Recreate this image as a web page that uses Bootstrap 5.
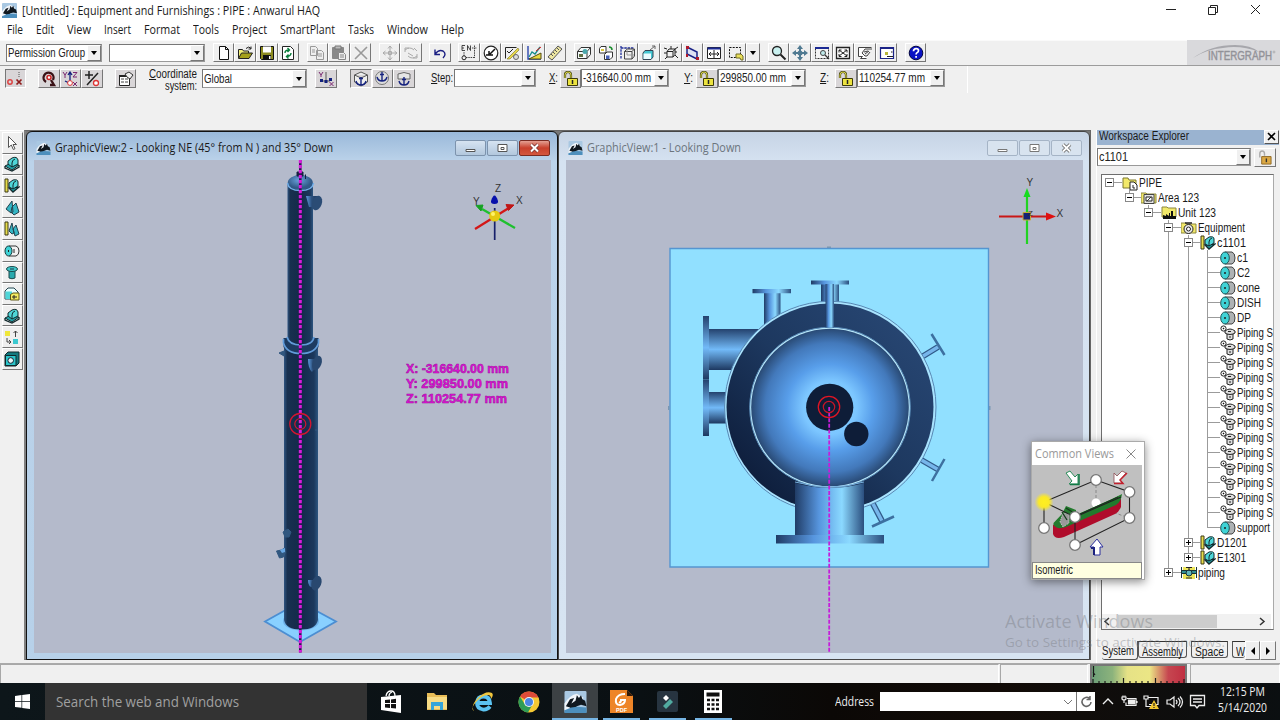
<!DOCTYPE html>
<html lang="en">
<head>
<meta charset="utf-8">
<title>[Untitled] : Equipment and Furnishings : PIPE</title>
<link href="https://cdn.jsdelivr.net/npm/bootstrap@5.3.0/dist/css/bootstrap.min.css" rel="stylesheet">
<script src="https://cdn.jsdelivr.net/npm/bootstrap@5.3.0/dist/js/bootstrap.bundle.min.js"></script>
<style>
body{width:1280px;height:720px;overflow:hidden;background:#f0f0f0;color:#1a1a1a;font-family:"Liberation Sans",Arial,sans-serif;font-size:12px;line-height:1}
.ui{font-family:"Open Sans","Segoe UI",sans-serif}
svg{display:block;flex:none}
[data-w]{white-space:nowrap;display:inline-block}
.fit{display:inline-block;transform-origin:0 50%}
.titlebar{height:20px;background:#fff;padding-left:2px}
.titlebar .ui{font-size:12px;margin-left:5px;margin-top:2px}
.menubar{height:20px;background:#fff;padding-left:7px;gap:13px;font-size:12px}
.tools1{height:26px;padding:0 0 1px 6px;border-top:1px solid #fafafa;border-bottom:1px solid #9c9c9c;gap:7.4px;background:#f0f0f0}
.tools2{height:64px;padding:3px 0 0 4.5px}
.combo{height:18px;background:#fff;border:1.5px solid #777;border-right-color:#999;border-bottom-color:#999;padding-left:1px;color:#222}
.combo .dd{width:14px;align-self:stretch;background:#f0f0f0;border:1px solid #fff;border-right-color:#777;border-bottom-color:#777}
.combo .dd::after,.ddb::after{content:"";border:3.5px solid transparent;border-top:4px solid #000;border-bottom:0}
.tb{width:21.6px;height:19px;padding:0;border:1px solid #fff;border-right:1.5px solid #777;border-bottom:1.5px solid #777;border-radius:0;background:#efefef;display:flex;align-items:center;justify-content:center;flex:none}
.tb.on{border-color:#777 #fff #fff #777;background:#e4e4e4}
.ddb{width:14px}
.tools2 .tb{background:#d9d6d8;height:19px}
.brand{width:93px;height:25px;background:#d9d9dc}
.workarea{height:533px}
.toolstrip{width:24px;padding:1px 0 0 1.5px;border-top:1px solid #fff}
.toolstrip .tb{height:21.6px;width:21px}
.mdi{width:1067px;background:#777;border:1px solid #666;border-left:2px solid #808080;padding:0;height:530px}
.gview{height:529px;border:1.5px solid #111;border-radius:6px 6px 0 0;padding:0 6.5px 5px}
.gview .cap{height:28px;padding:3px 1px 0 2px}
.gview.act{width:533px;background:linear-gradient(#9ab9da,#bcd3ea 30px,#b7d1e9)}
.gview.idle{width:532px;background:linear-gradient(#c6d4e5,#d5e2f1 30px,#d7e4f2);border-color:#444}
.cbtn{width:31px;height:16px;border:1px solid #7d93ad;border-radius:2px;background:linear-gradient(#d6e3f1,#b2c7dd);margin-left:1px}
.idle .cbtn{background:#d8e3ef;border-color:#a5b4c6}
.cbtn.x{background:linear-gradient(#e4a093,#c9402c 50%,#d3573f);border-color:#7a2b22}
.explorer{width:184px;border-left:1px solid #fff}
.exhead{height:15px;width:182px;background:#9ab3d0;padding-left:2px}
.exhead button{width:15px;height:14px;padding:0;border:1px solid #fff;border-right-color:#555;border-bottom-color:#555;background:#f0f0f0;border-radius:0}
.treebox{margin:7px 0 0 4px;width:173px;height:456px;background:#fff;border:1.5px solid #6e6e6e;border-right-color:#aaa;overflow:hidden}
.trow{height:15.02px;display:flex;align-items:center;white-space:nowrap}
.gd{width:19.7px;height:15.02px;flex:none;position:relative}
.gd.v::before{content:"";position:absolute;left:7px;top:0;bottom:0;border-left:1px solid #9b9b9b}
.gd.up::before{bottom:7px}
.gd.h::after{content:"";position:absolute;left:7px;right:0;top:7px;border-top:1px solid #9b9b9b}
.gd b{position:absolute;left:3px;top:3px;width:9px;height:9px;border:1px solid #888;background:#fff;z-index:1}
.gd b::before{content:"";position:absolute;left:1px;right:1px;top:3px;border-top:1px solid #000}
.gd b.p::after{content:"";position:absolute;top:1px;bottom:1px;left:3px;border-left:1px solid #000}
.hscroll{height:15px;background:#f1f1f1;margin-right:2px}
.hscroll i{width:99px;height:13px;background:#cdcdcd;margin-left:8px}
.tabrow{height:20px;margin-top:11px;padding-left:5px}
.tabx{height:17px;padding:0 3px;border:1px solid #555;border-top:1px solid #333;background:#f0f0f0;border-radius:0 0 3px 3px}
.tabx.sel{border-top:0;border-left:0;height:19px;border-right-color:#555}
.statusbar{height:20px;border-top:1px solid #aaa;background:#f0f0f0}
.spanel{border:1px solid #a8a8a8;border-right-color:#fff;border-bottom:0;height:19px}
.gauge{width:97px;height:19px;border:2px solid #777;border-bottom:0;background:linear-gradient(90deg,#6d9f78 0,#8cb37c 22%,#e6e286 38%,#ebe685 62%,#c64650 82%,#c02f42)}
.taskbar{height:37px;background:linear-gradient(90deg,#0d161a,#0a1013 50%,#0b0806 65%,#120b07 78%,#0b0f11);color:#eee}
.startb{width:45px}
.search{width:322px;background:#333;color:#a0a0a0;font-size:15px;padding-left:11px;height:37px}
.app{width:46px;height:37px;display:flex;align-items:center;justify-content:center;position:relative}
.app.run::after{content:"";position:absolute;bottom:0;left:5px;right:4px;height:2px;background:#76b5e4}
.app.cur{background:#3c4144}.app.cur::after{left:0;right:0}
.addr{width:215px;height:19px;background:#fff;color:#555;margin-left:6px}
.tray{gap:5px;margin-left:5px}
.clock{font-size:12px;line-height:16px;width:60px;text-align:center;margin:-3px 0 0 6px}
.commonviews{position:absolute;left:1031px;top:441px;width:114px;height:139px;background:#fff;border:1px solid #aaa;box-shadow:0 2px 9px rgba(0,0,0,.45)}
.commonviews .hd{height:23px;color:#999;font-size:12px;padding:0 8px 0 3px}
.commonviews .lb{height:17px;width:110px;background:#ffffe1;border:1px solid #888;padding:1px 0 0 2px}
.wmark{position:absolute;left:1005px;top:610px;color:rgba(120,124,130,.42);pointer-events:none}
.wmark .a{font-size:18px;line-height:22px}.wmark .b{font-size:13px;line-height:20px}
</style>
</head>
<body class="d-flex flex-column">
<svg width="0" height="0" class="position-absolute"><defs>
<symbol id="app" viewBox="0 0 16 16"><rect width="16" height="16" rx="1" fill="#a9c8e2"/><path d="M0 9Q4 3 9 2l5 3-5 3-5 6-4 0z" fill="#f0f5fa"/><path d="M1 11 4 6 7 5 5 9 8 7 9 3l1.500 2L12 3l1 3 2 1 1 4-4-1-3 1-3 3-2-2z" fill="#10181f"/><path d="M0 14 5 12 9 11.500 16 12V16H0z" fill="#4d8fbd"/></symbol>
<symbol id="new" viewBox="0 0 16 16"><path d="M3.500 1.500h6l3 3v10h-9zM9.500 1.500v3h3" fill="#fff" stroke="#111"/></symbol>
<symbol id="open" viewBox="0 0 16 16"><path d="M1.500 13V4.500h4l1 1.500h5v2" fill="#f2ef7a" stroke="#222"/><path d="M1.500 13.500 4.500 8h11L12 13.500z" fill="#a5a11b" stroke="#222"/><path d="M9 3.500q3-3 5 0m0-2v2.500h-2.500" fill="none" stroke="#222"/></symbol>
<symbol id="save" viewBox="0 0 16 16"><path d="M1.500 1.500h13v13h-12l-1-1z" fill="#8c8b20" stroke="#111"/><path d="M4 1.500h8v6H4z" fill="#fff"/><path d="M4 10h8v4.500H4z" fill="#111"/><path d="M10 11h1.500v3H10z" fill="#fff"/></symbol>
<symbol id="refresh" viewBox="0 0 16 16"><path d="M2.500 1.500h8l3 3v10h-11z" fill="#fff" stroke="#222"/><path d="M5 8q0-3 4-3m-1.500-2L9.500 5 7.500 7M11 8q0 3-4 3.500m1.500 2L6.500 11.500 8.500 9.500" fill="none" stroke="#087c3a" stroke-width="1.400"/></symbol>
<symbol id="copy" viewBox="0 0 16 16"><path d="M1.500 1.500h5l2 2v7h-7zM7.500 5.500h5l2 2v7h-7zM3 5h3M3 7h3M9 9h4M9 11h4" fill="#eee" stroke="#999"/></symbol>
<symbol id="paste" viewBox="0 0 16 16"><path d="M1.500 2.500h11v11h-11z" fill="#888" stroke="#888"/><path d="M4 1h6v3H4z" fill="#bbb" stroke="#777"/><path d="M7.500 7.500h5l2 2v5h-7zM9 10h4M9 12h4" fill="#eee" stroke="#888"/></symbol>
<symbol id="del" viewBox="0 0 16 16"><path d="M2 2 14 14M14 2 2 14" stroke="#999" stroke-width="1.600"/></symbol>
<symbol id="move" viewBox="0 0 16 16"><path d="M8 1v14M1 8h14M6 3.500 8 1l2 2.500M6 12.500 8 15l2-2.500M3.500 6 1 8l2.500 2M12.500 6 15 8l-2.500 2M6.500 6.500h3v3h-3z" fill="none" stroke="#aaa"/></symbol>
<symbol id="rot" viewBox="0 0 16 16"><path d="M2 7V3h4M2 5q5-4 9 0M14 9v4h-4M14 11q-5 4-9 0M11 3l3 3M5 8l5 3" fill="none" stroke="#aaa"/></symbol>
<symbol id="undo" viewBox="0 0 16 16"><path d="M3 9q4-5 8-3 4 3 0 7M3 4.500V9.500H8" fill="none" stroke="#1b1f83" stroke-width="1.400"/></symbol>
<symbol id="en" viewBox="0 0 16 16"><path d="M1 .5h3M1 .5v5h3M1 3h2M6.500 5.500V.5l3 5V.5" fill="none" stroke="#333" stroke-width=".9"/><path d="M3 11V7m2 5.500h9M13.500 5v8M11 3h5M13.500.500v5" fill="none" stroke="#444" stroke-dasharray="1.500 .8"/><circle cx="3" cy="12.800" r="2" fill="none" stroke="#222"/></symbol>
<symbol id="dial" viewBox="0 0 16 16"><circle cx="8" cy="8" r="6.800" fill="#fff" stroke="#222" stroke-width="1.200"/><path d="M3 10h7M12 4 7 9M6 6v4h4" stroke="#111" stroke-width="1.500" fill="none"/></symbol>
<symbol id="chk" viewBox="0 0 16 16"><path d="M1.500 2.500h11M1.500 2.500v11M3 6l2 2 4-4" stroke="#222" fill="none"/><path d="M3 14 14 3l1 2L6 14z" fill="#e9d94b" stroke="#776f22" stroke-width=".6"/><circle cx="12" cy="12" r="2.500" fill="#ddd" stroke="#666"/></symbol>
<symbol id="graph" viewBox="0 0 16 16"><path d="M2 1v13h13" stroke="#1e3aa8" stroke-width="1.300" fill="none"/><path d="M3 12 6 7l3 2 5-7" stroke="#178c8c" fill="none" stroke-width="1.300"/><path d="M10 6l5-4" stroke="#d22"/><path d="M3 14 15 8v6z" fill="#e8d840" stroke="#554d10"/></symbol>
<symbol id="ruler" viewBox="0 0 16 16"><path d="M1 12 11 1l4 3L5 15z" fill="#eee7a2" stroke="#555"/><path d="m4 9 2 2m0-4 2 2m0-4 2 2m0-4 2 2" stroke="#555"/></symbol>
<symbol id="cubeg" viewBox="0 0 16 16"><path d="M1.500 6.500 5 2.500h9.500v7L11 13.500H1.500zM1.500 6.500H11v7M11 6.500l3.500-4" fill="#f4fafa" stroke="#333"/><circle cx="9" cy="6.500" r="2.500" fill="#4aa8ac"/><path d="M3 9h4v3H3z" fill="#5e6f42"/></symbol>
<symbol id="cubes" viewBox="0 0 16 16"><path d="M1.500 3.500 3 1.500h5v5L7 8H1.500zM6.500 9.500 9 7h5.500v5L12 14.500H6.500z" fill="#fff" stroke="#333"/><path d="M8 10.500h3.500v3.500H8z" fill="#4761b5"/><path d="M11 2q3 0 3 3" stroke="#178c2c" fill="none" stroke-width="1.500"/><path d="M3 4h3v2H3z" fill="#d8c53b"/></symbol>
<symbol id="wire" viewBox="0 0 16 16"><path d="M1 3h13M1 1v13" stroke="#1f2e99" stroke-width="1.300" stroke-dasharray="2.500 .8"/><path d="M4.500 6.500 7 4h7.500v7L12 14H4.500zM4.500 6.500H12V14M12 6.500 14.500 4" fill="none" stroke="#444"/><path d="M7 4v6h7" stroke="#999" fill="none"/></symbol>
<symbol id="box" viewBox="0 0 16 16"><path d="M2 8 4 5.500h8V12l-2 2.500H2z" fill="#45c7d2" stroke="#345"/><path d="M2.500 8.500H10v5.500H2.500z" fill="#eafcff"/><path d="M9 5l5-4m-3 0h3v3" stroke="#666" fill="none"/></symbol>
<symbol id="fit" viewBox="0 0 16 16"><path d="M4 6.500 6 4h6v5.500L10 12H4zM4 6.500h6V12M10 6.500 12 4" fill="none" stroke="#222"/><path d="M1 3l3 1M15 2l-3 2M2 14l2-2M15 13l-3-3M8 1v3M14 7h-2M1 8h3" stroke="#222"/></symbol>
<symbol id="plane" viewBox="0 0 16 16"><path d="M3 2 13 7V14L3 9z" fill="#dfe2f3" stroke="#1b2387" stroke-width="1.500"/><path d="M2 1h3v3H2zM12 12h3v3h-3zM2 9h2v3H2z" fill="#b11a2b"/></symbol>
<symbol id="center" viewBox="0 0 16 16"><path d="M1.500 2.500h13v11h-13z" fill="#fff" stroke="#222"/><path d="M1.500 3.500h13" stroke="#1c2a94" stroke-width="2"/><path d="M8 5v8M3.500 9h9M5 7 3 9l2 2M11 7l2 2-2 2" stroke="#222" fill="none"/></symbol>
<symbol id="fence" viewBox="0 0 16 16"><path d="M1.500 2.500h11v10h-11z" fill="none" stroke="#111" stroke-dasharray="2 1.200"/><path d="M8 9h5l2 2v4h-2l-1-2H8z" fill="#e9df5a" stroke="#6f6a26"/></symbol>
<symbol id="zoom" viewBox="0 0 16 16"><circle cx="6" cy="6" r="4.500" fill="#c9f0ef" stroke="#222" stroke-width="1.300"/><path d="m9.500 9.500 5 5" stroke="#222" stroke-width="2"/></symbol>
<symbol id="pan" viewBox="0 0 16 16"><path d="M8 0l3 4H9v2h-2V4H5zM8 16l3-4H9v-2H7v2H5zM0 8l4-3v2h8V5l4 3-4 3V9H4v2z" fill="#4f7991"/><circle cx="8" cy="8" r="2.500" fill="#4f7991"/></symbol>
<symbol id="zwin" viewBox="0 0 16 16"><path d="M1.500 2.500h13v11h-13z" fill="#f4f4f4" stroke="#333" stroke-dasharray="2 1"/><path d="M1 3h14" stroke="#1c2a94" stroke-width="2"/><circle cx="9" cy="8" r="2.500" fill="#bfe9ea" stroke="#444"/><path d="m11 10 4 4" stroke="#333" stroke-width="1.300"/></symbol>
<symbol id="zall" viewBox="0 0 16 16"><path d="M1.500 2.500h13v11h-13z" fill="#fff" stroke="#222" stroke-width="1.300"/><path d="m4 5 8 6M12 5l-8 6M4 7.500V5h2.500M9.500 5H12v2.500M4 9v2.500h2.500M9.500 11.500H12V9" fill="none" stroke="#222"/></symbol>
<symbol id="hand" viewBox="0 0 16 16"><path d="M14.500 2.500h-13v9h4l-2 2h6" fill="#fff" stroke="#444"/><path d="M15 4 8 4 5 8l3 3 2 0 3-4M7 7l4-1M8 9l4-3" fill="#eee" stroke="#444"/></symbol>
<symbol id="wins" viewBox="0 0 16 16"><path d="M1.500 2.500h13v11h-13z" fill="#fff" stroke="#1b2387" stroke-width="1.200"/><path d="M1 3h14" stroke="#1b2387" stroke-width="2"/><path d="M6 7h3v3H6z" fill="#b9b63a"/><path d="M12 7h1.500M8 11.500h6" stroke="#222"/></symbol>
<symbol id="help" viewBox="0 0 16 16"><circle cx="8" cy="8" r="6.800" fill="#0a12c4" stroke="#02063f"/><path d="M5.500 6.200q0-2.500 2.600-2.500 2.400 0 2.400 2 0 1.300-1.500 2-.9.400-.9 1.800M8.100 11v1.700" fill="none" stroke="#fff" stroke-width="1.700"/></symbol>
<symbol id="pt" viewBox="0 0 16 16"><circle cx="3" cy="11" r="2.200" fill="none" stroke="#d44" stroke-width="1.500"/><path d="m9.500 8.500 5 5m0-5-5 5" stroke="#8e1b1b" stroke-width="1.700"/><path d="M12 1v6" stroke="#555" stroke-dasharray="1 1"/></symbol>
<symbol id="pin" viewBox="0 0 16 16"><path d="M5 11a5 5 0 1 1 7-2M9 14h4l-3-5" fill="none" stroke="#3a1216" stroke-width="2.400"/><circle cx="8" cy="6.500" r="2" fill="#fff" stroke="#c22" stroke-width="1.500"/></symbol>
<symbol id="xyz" viewBox="0 0 16 16"><path d="M1 1l2 3 2-3M3 4v3M11 1.500h4L11 6h4M11 11l4 4m0-4-4 4" stroke="#7a2670" fill="none"/><path d="M8 1v10M3 10l4 2M6 4l2-3 2 3" stroke="#111f7c" fill="none" stroke-width="1.300"/><circle cx="8" cy="12" r="2.400" fill="#fff" stroke="#d33"/></symbol>
<symbol id="pm" viewBox="0 0 16 16"><path d="M5 0v8M1 4h8M3 14 14 2" stroke="#222" stroke-width="1.500"/><circle cx="12" cy="12" r="2.500" fill="#fff" stroke="#d33" stroke-width="1.300"/></symbol>
<symbol id="prop" viewBox="0 0 16 16"><path d="M1.500 4.500h10v10h-10z" fill="#fff" stroke="#222"/><path d="M1 5h11" stroke="#222" stroke-width="2"/><path d="M3 8h3M3 11h3M7 8h3M7 11h3" stroke="#444"/><path d="M7 3l4-2 4 3-3 4-3-2z" fill="#eee" stroke="#333"/></symbol>
<symbol id="axis" viewBox="0 0 16 16"><path d="M1 1l2 3 2-3M3 4v2M11.500 11l4 4m0-4-4 4" stroke="#7a2670" fill="none"/><path d="M8 1v10M2 8l2 2h8l2-2" stroke="#555" fill="none"/><path d="M6.500 9h3v3h-3zM2 8h3v3H2zM11 7h3v3h-3z" fill="#111f7c"/></symbol>
<symbol id="anc1" viewBox="0 0 16 16"><path d="M1.500 4 8 1l6.500 3v7L8 15l-6.500-4zM1.500 4 8 7l6.500-3" fill="#eee" stroke="#555"/><path d="M8 6v8M3 10q1 4 5 4t5-4M6 7.500h4" stroke="#16237f" fill="none" stroke-width="1.400"/></symbol>
<symbol id="anc2" viewBox="0 0 16 16"><circle cx="8" cy="7" r="6.500" fill="#ddd" stroke="#777"/><path d="M8 1v9M3 6q1 4 5 4t5-4M6 3.500h4" stroke="#16237f" fill="none" stroke-width="1.400"/></symbol>
<symbol id="anc3" viewBox="0 0 16 16"><path d="M2 3q6-3 12 0v5H2z" fill="#e6e6e6" stroke="#666"/><path d="M8 6v8M3 10q1 4 5 4t5-4M6 8.500h4" stroke="#16237f" fill="none" stroke-width="1.400"/></symbol>
<symbol id="lock" viewBox="0 0 16 16"><path d="M2 7V4q0-3 3-3t3 3v3" fill="none" stroke="#4b4b13" stroke-width="2.200"/><path d="M2 7V4q0-3 3-3t3 3v3" fill="none" stroke="#e8e250" stroke-width=".9"/><path d="M4.500 7.500h10v7h-10z" fill="#ece33f" stroke="#3c3a0c"/><path d="M9.500 9v4" stroke="#222" stroke-width="1.500"/></symbol>
<symbol id="ptr" viewBox="0 0 16 16"><path d="M4.500 1.500v11l2.800-2.500 2 4.500 1.700-.8-2-4.200h3.500z" fill="#fff" stroke="#555"/></symbol>
<symbol id="eq" viewBox="0 0 16 16"><path d="M1 10 5 8 15 9 8 14z" fill="#23a2a8" stroke="#12292c"/><path d="M1 10v2l7 3 7-4V9" fill="none" stroke="#12292c" stroke-width="1.300"/><path d="M4 8V5l4-3q5-2 6 2v4l-6 3z" fill="#4fd6d8" stroke="#12292c"/><path d="M8 11V7q0-3 3-4" fill="none" stroke="#12292c"/></symbol>
<symbol id="eqr" viewBox="0 0 16 16"><path d="M1 1h3v13H1z" fill="#e6dc4b" stroke="#3c3b16"/><path d="M5 10 15 9 9 14z" fill="#23a2a8" stroke="#12292c" stroke-width="1.300"/><path d="M5 9V5l4-3q5-1 5 2v4l-5 3z" fill="#4fd6d8" stroke="#12292c"/><path d="M9 11V7q0-3 3-4" fill="none" stroke="#12292c"/></symbol>
<symbol id="pl" viewBox="0 0 16 16"><path d="M2 9 8 1l1 11-2 1zM7 12l1-5 4-4 3 9-5 3z" fill="#35b5c4" stroke="#24424d"/></symbol>
<symbol id="plr" viewBox="0 0 16 16"><path d="M1 1h3v13H1z" fill="#e6dc4b" stroke="#3c3b16"/><path d="M5 10 8 2l2 10-2 1zM9 8l3-4 3 9-4 2z" fill="#35b5c4" stroke="#24424d"/></symbol>
<symbol id="cyl" viewBox="0 0 16 16"><path d="M5 3h7q3 1 3 5t-3 5H5z" fill="#f2f2f2" stroke="#333"/><ellipse cx="4.500" cy="8" rx="3.500" ry="5" fill="#3fd3d6" stroke="#1c3b3d"/><path d="M4.500 7v2M10 6v4" stroke="#222"/></symbol>
<symbol id="cylg" viewBox="0 0 16 16"><path d="M5 2h7q3 1 3 6t-3 6H5z" fill="#aeb2b4" stroke="#444"/><ellipse cx="5" cy="8" rx="4.300" ry="6" fill="#3fd3d6" stroke="#1c5557"/><path d="M5 7v2" stroke="#222" stroke-width="1.500"/></symbol>
<symbol id="noz" viewBox="0 0 16 16"><path d="M5 6h6v8q-3 1.500-6 0z" fill="#2aa9ad" stroke="#1c4b4d"/><ellipse cx="8" cy="5" rx="5.500" ry="2.500" fill="#3ec8ca" stroke="#1c4b4d"/><path d="M6 5h4" stroke="#234"/></symbol>
<symbol id="sol" viewBox="0 0 16 16"><path d="M1 5 4 2h6l4 4v7H1z" fill="#e9ffff" stroke="#24424d"/><path d="M1.500 5.500H8V13H1.500z" fill="#4fd6d8"/><path d="M6.500 8.500 9 7h6v7H6.500z" fill="#f2ea62" stroke="#5e5816"/><path d="M8 11h5m-3-2v4" stroke="#222"/></symbol>
<symbol id="swap" viewBox="0 0 16 16"><path d="M1 2h5v5H1z" fill="#efe73a"/><path d="M9 10h5v5H9z" fill="#3cc9d0"/><path d="M11.500 8V2M9.500 4l2-2 2 2M3 9v4h4M5 11l2 2-2 2" stroke="#444" fill="none"/></symbol>
<symbol id="hole" viewBox="0 0 16 16"><path d="M1 4 4 1h11V12l-3 3H1z" fill="#14797e" stroke="#10282a"/><path d="M1.500 4.500H12v10H1.500z" fill="#2bc5ca" stroke="#10282a"/><circle cx="6.700" cy="9.500" r="2.800" fill="#e9f6f6" stroke="#123"/></symbol>
<symbol id="fpipe" viewBox="0 0 16 16"><path d="M1 3h5l1 2h7v8H1z" fill="#f2e96a" stroke="#7d7830"/><path d="M8 7h4l3 3v5H8z" fill="#fff" stroke="#222"/><path d="M11 10v3h2" stroke="#222" fill="none"/></symbol>
<symbol id="farea" viewBox="0 0 16 16"><path d="M0 3h5l1 1h9v9H0z" fill="#f2e96a" stroke="#8b8640"/><path d="M3 4.500h10v9H3z" fill="#e4e4e4" stroke="#444"/><path d="M5 7h6v4H5z" fill="#fff" stroke="#222"/><path d="m6 11 4-4" stroke="#333"/></symbol>
<symbol id="funit" viewBox="0 0 16 16"><path d="M1 2h5l1 1h8v9H1z" fill="#f2e96a" stroke="#8b8640"/><path d="M2 14V10l3 1V9l3 2V8h1v3h1V6h2v5h3v3z" fill="#111"/></symbol>
<symbol id="feq" viewBox="0 0 16 16"><path d="M0 3h5l1 1h9v9H0z" fill="#f2e96a" stroke="#8b8640"/><circle cx="7.500" cy="9" r="4.500" fill="#eee" stroke="#222"/><circle cx="7.500" cy="9" r="2" fill="#fff" stroke="#222"/><path d="M4 3h7" stroke="#222" stroke-width="1.500"/></symbol>
<symbol id="pn" viewBox="0 0 16 16"><circle cx="3.500" cy="3.500" r="2.600" fill="#fff" stroke="#222"/><path d="M3 3h1v1H3z" fill="#111" stroke="#111" stroke-width=".5"/><path d="M5 6q5-4 10 0v2l-2 1v5q-3 2-6 0V9L5 8z" fill="#ddd" stroke="#222"/><path d="M7 9q3 1 6 0M8 6.500h3M9 12h2" stroke="#222" fill="none"/></symbol>
<symbol id="fp" viewBox="0 0 16 16"><path d="M2 2h12v12H2z" fill="#ede558"/><path d="M.5 2v11M15.500 2v11M.5 5.500h15v3H.5z" fill="#338f95" stroke="#1a3335"/><circle cx="8" cy="8" r="3" fill="#62b6bb" stroke="#1a3335"/><path d="M5 2.500h6M8 3v3M5 13h6" stroke="#222"/></symbol>
</defs></svg>

<header>
<div class="titlebar d-flex align-items-center"><svg width="15" height="15"><use href="#app"/></svg><span class="ui" data-w="298">[Untitled] : Equipment and Furnishings : PIPE : Anwarul HAQ</span>
<svg class="ms-auto" style="margin-right:12px" width="104" height="18" fill="none" stroke="#222"><path d="M2 8.500h10M44.500 6.500h7v7h-7zM46.500 6.500v-2h7v7h-2M87 4l9 9m0-9-9 9"/></svg></div>
<nav class="menubar ui d-flex align-items-center"><span data-w="16">File</span><span data-w="18">Edit</span><span data-w="24">View</span><span data-w="27">Insert</span><span data-w="36">Format</span><span data-w="26">Tools</span><span data-w="35">Project</span><span data-w="55">SmartPlant</span><span data-w="26">Tasks</span><span data-w="41">Window</span><span data-w="23">Help</span></nav>
<div class="tools1 d-flex align-items-center">
<div class="combo d-flex align-items-center justify-content-between" style="width:96px"><span data-w="77">Permission Group</span><span class="dd d-flex align-items-center justify-content-center"></span></div>
<div class="combo d-flex align-items-center justify-content-end" style="width:96px"><span class="dd d-flex align-items-center justify-content-center"></span></div>
<div class="d-flex" data-tools="new open save refresh"></div><div class="d-flex" data-tools="copy paste del"></div><div class="d-flex" data-tools="move rot"></div><div class="d-flex" data-tools="undo"></div><div class="d-flex" data-tools="en dial chk graph ruler"></div>
<div class="d-flex"><div class="d-flex" data-tools="cubeg cubes wire box fit plane center fence"></div><button class="tb ddb"></button></div>
<div class="d-flex" data-tools="zoom pan zwin zall hand wins"></div><div class="d-flex" data-tools="help"></div>
<div class="brand ms-auto"><svg width="93" height="25" fill="none"><path d="M6 18Q24 5 48 5q16 0 24 7-18-7-36-4Q20 9 6 18z" fill="#a7a7ac"/><text x="21" y="20" font-family="Liberation Sans" font-size="12" fill="#929298" stroke="#929298" stroke-width=".4" textLength="64" lengthAdjust="spacingAndGlyphs">INTERGRAPH</text><circle cx="87" cy="12" r="1" stroke="#999" stroke-width=".6"/></svg></div>
</div>
<div class="tools2 d-flex align-items-start">
<div data-tools="pt" data-on="1"></div>
<div class="d-flex" style="margin-left:12px" data-tools="pin xyz pm"></div>
<div style="margin-left:12px" data-tools="prop"></div>
<div class="text-end" style="width:61px;margin-top:-1px;line-height:12px"><span data-w="48"><u>C</u>oordinate</span><br><span data-w="32">system:</span></div>
<div class="combo d-flex align-items-center justify-content-between" style="width:105px;margin-left:5px;height:19px"><span data-w="28">Global</span><span class="dd d-flex align-items-center justify-content-center"></span></div>
<div style="margin-left:8px" data-tools="axis"></div>
<div class="d-flex" style="margin-left:13px" data-tools="anc1 anc2 anc3" data-on="1"></div>
<div class="d-flex align-items-center" style="margin-left:16px;height:17px"><span data-w="22"><u>S</u>tep:</span></div>
<div class="combo d-flex justify-content-end" style="width:82px;margin-left:1px"><span class="dd d-flex align-items-center justify-content-center"></span></div>
<div class="d-flex align-items-center" style="margin-left:13px;height:17px;width:11px"><span data-w="9"><u>X</u>:</span></div><div data-tools="lock"></div>
<div class="combo d-flex align-items-center justify-content-between" style="width:88px"><span data-w="68">-316640.00 mm</span><span class="dd d-flex align-items-center justify-content-center"></span></div>
<div class="d-flex align-items-center" style="margin-left:15px;height:17px;width:12px"><span data-w="9"><u>Y</u>:</span></div><div data-tools="lock"></div>
<div class="combo d-flex align-items-center justify-content-between" style="width:88px"><span data-w="66">299850.00 mm</span><span class="dd d-flex align-items-center justify-content-center"></span></div>
<div class="d-flex align-items-center" style="margin-left:14px;height:17px;width:15px"><span data-w="9"><u>Z</u>:</span></div><div data-tools="lock"></div>
<div class="combo d-flex align-items-center justify-content-between" style="width:88px"><span data-w="66">110254.77 mm</span><span class="dd d-flex align-items-center justify-content-center"></span></div>
<div class="border-start border-white" style="margin:-3px 0 0 22px;height:27px"></div>
</div>
</header>

<main class="workarea d-flex">
<aside class="toolstrip" data-tools="ptr eq eqr pl plr cyl noz sol eq swap hole"></aside>
<section class="mdi d-flex">
<div class="gview act"><div class="cap d-flex align-items-center"><svg width="15" height="14"><use href="#app"/></svg><span class="ui ms-1" style="font-size:12px" data-w="278">GraphicView:2 - Looking NE (45° from N ) and 35° Down</span>
<div class="d-flex ms-auto"><div class="cbtn"><svg width="29" height="14"><path d="M10 8.500h9v2h-9z" fill="#fff" stroke="#555"/></svg></div><div class="cbtn"><svg width="29" height="14"><path d="M10 3.500h9v7h-9zM13 6.500h3v2h-3z" fill="#fff" stroke="#555"/></svg></div><div class="cbtn x"><svg width="29" height="14"><path d="m11 3.500 7 7m0-7-7 7" stroke="#733" stroke-width="3.500"/><path d="m11 3.500 7 7m0-7-7 7" stroke="#fff" stroke-width="2"/></svg></div></div></div>
<svg width="517" height="493" viewBox="34 160 517 493">
<defs>
<linearGradient id="col"><stop offset="0" stop-color="#2f5480"/><stop offset=".1" stop-color="#18304f"/><stop offset=".5" stop-color="#14294a"/><stop offset=".88" stop-color="#1b375b"/><stop offset="1" stop-color="#2d5580"/></linearGradient>
<linearGradient id="nz"><stop offset="0" stop-color="#5c9bdc"/><stop offset=".5" stop-color="#2e527f"/><stop offset="1" stop-color="#1f3a60"/></linearGradient>
<radialGradient id="dome" cx=".45" cy=".35"><stop offset="0" stop-color="#6ba2dd"/><stop offset="1" stop-color="#315a87"/></radialGradient>
</defs>
<path fill="#b4bacb" d="M34 159h517v495H34z"/>
<path d="M265 621.500 300 602l36 19.500L300 642z" fill="#89d0ff" stroke="#4c8ed2" stroke-width="1.800"/>
<ellipse cx="301" cy="621" rx="18" ry="9.500" fill="#6fb2ea"/>
<path d="M284 345h34v275q-2 9.500-17 9.500T284 620z" fill="url(#col)"/>
<path d="M283.500 338h35v9q-3 7-17.500 7t-17.500-7z" fill="#1d3b61"/><path d="M283.500 343q3 10.500 17.500 10.500T318.500 343v-4M283.500 343v-4" fill="none" stroke="#619bd9" stroke-width="1.700"/>
<path d="M287.500 183h25.500v156q-2 6-13 6t-12.500-6z" fill="url(#col)"/><path d="M287 337q2 8 14 8t13-8" fill="none" stroke="#619bd9" stroke-width="1.700"/>
<ellipse cx="300.300" cy="182.500" rx="12.500" ry="7.500" fill="url(#dome)"/><path d="M287.500 183q1 7.500 13 7.500t13-7.500" fill="none" stroke="#72aee8" stroke-width="1.500"/>
<path d="M297 172h6v4h-6zM305.500 174.500v4.500" fill="#152240" stroke="#152240"/>
<path d="M306 196h11v7l-5 4h-3z" fill="url(#nz)"/><ellipse cx="317" cy="203" rx="4.800" ry="7.500" transform="rotate(20 317 203)" fill="#2b4c75"/>
<path d="M308 359h9v7l-5 6q-4-4-4-13z" fill="url(#nz)"/><ellipse cx="317" cy="363" rx="4.500" ry="7.500" transform="rotate(20 317 363)" fill="#29486f"/>
<path d="M308 580h8v7q-8 2-8-7z" fill="url(#nz)"/><ellipse cx="316.500" cy="583" rx="4.800" ry="7.500" transform="rotate(20 316 583)" fill="#29486f"/>
<path d="M279 353l5-2v5zM276.500 551l5-1 3-2 1 4-2 5-4 1zM283 532l5-3 3 3-2 5-4 0zM315 430h3" fill="#31577f" stroke="#31577f"/>
<path d="M280 550l5-2v4l-3 1z" fill="#68a7e4"/>
<path d="M300.300 160v492.500" stroke="#2a1455" stroke-width="2.600"/><path d="M300.300 160v492.500" stroke="#d91bdb" stroke-width="3" stroke-dasharray="3.200 1.800"/>
<circle cx="300.300" cy="424" r="10.500" fill="none" stroke="#d31630" stroke-width="1.300"/><circle cx="300.300" cy="424" r="5.500" fill="none" stroke="#d31630" stroke-width="1.200"/>
<g stroke-width="2.200"><path d="M494.700 240V208" stroke="#17206b" stroke-width="1.700"/><path d="M475 229 508 208.500" stroke="#d31717"/><path d="M515 228 482 209" stroke="#1ec02e"/></g>
<path d="M491 201q3.500-11 7 0 .5 3-3.500 3t-3.500-3z" fill="#0710ab"/><path d="M514 205l-8-.5 2.500 6z" fill="#c01717" stroke="#c01717"/><path d="M476 205.500l7-.5-2 6z" fill="#16a223" stroke="#16a223"/><circle cx="494.700" cy="216" r="5.500" fill="#e5c912"/><circle cx="493" cy="214" r="2" fill="#fff26a"/>
<g font-family="Liberation Sans" font-size="10" fill="#333"><text x="495" y="192">Z</text><text x="516" y="204">X</text><text x="473" y="205">Y</text></g>
<g font-family="Liberation Sans" font-size="12" font-weight="bold" fill="#e514dc" stroke="#9c0c9b" stroke-width=".5"><text x="406" y="373" textLength="103" lengthAdjust="spacingAndGlyphs">X: -316640.00 mm</text><text x="406" y="388" textLength="102" lengthAdjust="spacingAndGlyphs">Y: 299850.00 mm</text><text x="406" y="403" textLength="101" lengthAdjust="spacingAndGlyphs">Z: 110254.77 mm</text></g>
</svg></div>
<div class="gview idle"><div class="cap d-flex align-items-center"><svg width="15" height="14"><use href="#app"/></svg><span class="ui ms-1 text-secondary" style="font-size:12px" data-w="154">GraphicView:1 - Looking Down</span>
<div class="d-flex ms-auto"><div class="cbtn"><svg width="29" height="14"><path d="M10 8.500h9v2h-9z" fill="#fff" stroke="#777"/></svg></div><div class="cbtn"><svg width="29" height="14"><path d="M10 3.500h9v7h-9zM13 6.500h3v2h-3z" fill="#fff" stroke="#777"/></svg></div><div class="cbtn"><svg width="29" height="14"><path d="m11 3.500 7 7m0-7-7 7" stroke="#666" stroke-width="3.500"/><path d="m11 3.500 7 7m0-7-7 7" stroke="#fff" stroke-width="1.800"/></svg></div></div></div>
<svg width="517" height="493" viewBox="566 160 517 493">
<defs>
<linearGradient id="ring" x1="0" y1="1" x2="1" y2="0"><stop offset=".1" stop-color="#0d1c39"/><stop offset=".5" stop-color="#1d385f"/><stop offset="1" stop-color="#2a4a78"/></linearGradient>
<radialGradient id="ball"><stop offset="0" stop-color="#8ad8ff"/><stop offset=".34" stop-color="#7cc6ff"/><stop offset=".55" stop-color="#589eea"/><stop offset=".82" stop-color="#4379bb"/><stop offset="1" stop-color="#294a75"/></radialGradient>
<linearGradient id="ph"><stop offset="0" stop-color="#203c66"/><stop offset=".35" stop-color="#5796df"/><stop offset=".68" stop-color="#8bd9ff"/><stop offset="1" stop-color="#2b4f7f"/></linearGradient>
<linearGradient id="pv" x1="0" y1="0" x2="0" y2="1"><stop offset="0" stop-color="#24426e"/><stop offset=".5" stop-color="#72baf8"/><stop offset="1" stop-color="#1d3860"/></linearGradient>
</defs>
<path fill="#b4bacb" d="M566 159h517v495H566z"/>
<path d="M670 248.500h318.500v318.500H670z" fill="#91e0ff" stroke="#5595d0" stroke-width="1.400"/>
<g fill="url(#pv)"><path d="M709 329h50v41h-50z"/><path d="M709 392h18v31.500h-18z"/><path d="M703 316h6v63.500h-6z"/><path d="M703 379.500h6V436h-6z"/></g>
<g fill="url(#ph)"><path d="M764 293h16.500v32H764z"/><path d="M752.500 289h38.500v4.300h-38.500z"/><path d="M821 283h18v20h-18z"/></g>
<g fill="none"><path d="M920 358 938 347M918 458l20 11.500M872 502l10 19" stroke="#315b8a" stroke-width="6"/><path d="M920 358 938 347M918 458l20 11.500M872 502l10 19" stroke="#77b6eb" stroke-width="3.500"/><path d="M931.500 334 944.500 355M944.500 459 932 481M872 526.500l22-10" stroke="#3d70a0" stroke-width="2.500"/></g>
<circle cx="830.300" cy="407" r="105.700" fill="#a9e4ff" stroke="#5788b4"/><circle cx="830" cy="407" r="103.500" fill="url(#ring)"/>
<circle cx="830" cy="407.500" r="80.300" fill="#b9e8fb" stroke="#5688b5"/>
<circle cx="830" cy="407.500" r="78.800" fill="url(#ball)"/>
<g fill="url(#ph)"><path d="M811 280.500h38v4h-38z"/><path d="M825.500 284h8.500v43.500h-8.500z"/><path d="M795 483q35 10 69 0v53h-69z"/><path d="M776 535h108v8.500H776z"/></g>
<path d="M795 482q35 10 69 0" fill="none" stroke="#78b1df"/>
<circle cx="829.700" cy="407.300" r="23.600" fill="#0e1d38"/><circle cx="856.300" cy="434" r="12.200" fill="#0e1d38"/>
<path d="M829.200 407v246" stroke="#c61edb" stroke-width="1.800" stroke-dasharray="4 1.600"/>
<circle cx="829" cy="407" r="10.700" fill="none" stroke="#e01524" stroke-width="1.300"/><circle cx="829" cy="407" r="5.700" fill="none" stroke="#c51528" stroke-width="1.200"/>
<path d="M827 246.500h4v1.500h-4zM668 406h1.500v4H668zM989 406h1.500v4H989z" fill="#7897b4"/>
<g stroke-width="2.200"><path d="M1027 244V195" stroke="#21d321"/><path d="M999 216.500h49" stroke="#c91717"/></g><path d="m1023.500 197 3.500-9 3.500 9z" fill="#17dc20"/><path d="m1046 212.500 10 4-10 4z" fill="#df1010"/><path d="M1023 212.500h7.500v7.500h-7.500z" fill="#162176" stroke="#c7a635"/>
<g font-family="Liberation Sans" font-size="10" fill="#333"><text x="1026.500" y="186">Y</text><text x="1056.500" y="217">X</text><text x="1028" y="216" font-size="8">Z</text></g>
</svg></div>
</section>

<aside class="explorer ms-auto">
<div class="exhead d-flex align-items-start justify-content-between"><span data-w="90">Workspace Explorer</span><button class="btn"><svg width="13" height="12"><path d="m3 2 7 7m0-7-7 7" stroke="#000" stroke-width="1.600"/></svg></button></div>
<div class="d-flex" style="margin-top:3px;gap:3px"><div class="combo d-flex align-items-center justify-content-between" style="width:154px"><span data-w="29">c1101</span><span class="dd d-flex align-items-center justify-content-center"></span></div><div class="tb"><svg width="15" height="15" viewBox="0 0 16 16"><path d="M3 8V4q0-3 2.500-3T8 4v2" fill="none" stroke="#aaa" stroke-width="1.500"/><path d="M5 7h10v8H5z" fill="#dca945" stroke="#8e6822"/><path d="M10 9v4" stroke="#333" stroke-width="1.500"/></svg></div></div>
<div class="treebox d-flex flex-column"><div id="tree" class="flex-grow-1"></div>
<div class="hscroll d-flex align-items-center"><svg width="8" height="9" fill="none" stroke="#333" stroke-width="1.500"><path d="M7 1 3 4.500 7 8"/></svg><i></i><svg class="ms-auto me-1" width="8" height="9" fill="none" stroke="#333" stroke-width="1.500"><path d="M1 1l4 3.500L1 8"/></svg></div></div>
<div class="tabrow d-flex align-items-start"><div class="tabx sel pt-1 ps-0"><span data-w="32">System</span></div><div class="tabx pt-1"><span data-w="41">Assembly</span></div><div class="tabx pt-1 ms-1"><span data-w="29">Space</span></div><div class="tabx pt-1 ms-1 pe-0 border-end-0"><span data-w="9">W</span></div><div class="tb" style="width:15px"><svg width="6" height="8"><path d="M5 0v8L1 4z"/></svg></div><div class="tb" style="width:16px"><svg width="6" height="8"><path d="M1 0v8l4-4z"/></svg></div></div>
</aside>
</main>

<div class="statusbar d-flex"><div class="spanel" style="width:999px"></div><div class="spanel" style="width:88px;margin-left:1px"></div><div class="gauge" style="margin-left:2px"><svg width="93" height="17"><path d="M1.500 0v11M1 6l2 3M1 17v-4M7 17v-2M13 17v-2M19 17v-2M25 17v-2M31.500 17v-5M38 17v-2M44 17v-2M50 17v-2M56 17v-2M63.500 17v-5M69 17v-2M75 17v-2M81 17v-2M87 17v-2M92 17v-4" stroke="#1a1a1a" stroke-width="1.200"/></svg></div><div class="spanel flex-grow-1" style="margin-left:3px"></div></div>

<footer class="taskbar ui d-flex align-items-center">
<div class="startb d-flex justify-content-center"><svg width="15" height="15" fill="#fff"><path d="M0 2l6.500-1v6H0zM7.200.9 15 0v7H7.200zM0 7.800h6.500v6L0 13zM7.200 7.800H15V15l-7.800-1z"/></svg></div>
<div class="search d-flex align-items-center"><span data-w="183">Search the web and Windows</span></div>
<div class="d-flex" style="margin-left:1px">
<div class="app"><svg width="20" height="23"><path d="M5 6Q6 1 10 1t4 5M8 6q0-3 3-4" fill="none" stroke="#fff" stroke-width="1.300"/><path d="M0 7 20 5V23L0 20z" fill="#fff"/><path d="M4 10l5-.5V13H4zM10 9.400l5-.6V13h-5zM4 14h5v4l-5-.5zM10 14h5v4.600l-5-.6z" fill="#111"/></svg></div>
<div class="app"><svg width="20" height="19"><path d="M0 1h7l2 2h11v15H0z" fill="#e8bd57"/><path d="M0 5h20v12H0z" fill="#f7dc85"/><path d="M4 10h12v8h-3v-4H7v4H4z" fill="#35a5d9"/></svg></div>
<div class="app"><svg width="24" height="22" fill="none"><path d="M19 15.500Q16 19 12 18.500 6 17.500 6 12 6.500 5.500 12.500 5.500T19 12H7" stroke="#5bc3f1" stroke-width="3.800"/><path d="M3 20Q-1 15 7 7T21 2q2 2-1 6 0-4-3-4Q11 4 5 11T3 20z" fill="#f0c63d"/></svg></div>
<div class="app"><svg width="22" height="22" viewBox="0 0 22 22"><circle cx="11" cy="11" r="10.500" fill="#f6c933"/><path d="M11 11 2 5.500A10.500 10.500 0 0 1 20.500 6.500H11z" fill="#dd4b39"/><path d="M2 5.500A10.500 10.500 0 0 0 10 21.500L14.500 13.500 6 12z" fill="#2e9c56"/><circle cx="11" cy="11" r="5" fill="#f4f4f4"/><circle cx="11" cy="11" r="4" fill="#4a86e4"/></svg></div>
<div class="app run cur"><svg width="23" height="22"><use href="#app"/></svg></div>
<div class="app run"><svg width="23" height="23"><path d="M0 0h17l6 6v17H0z" fill="#ee8528"/><path d="M17 0l6 6h-6z" fill="#311b0b"/><path d="M15 4Q8 4 6 9q-1 6 4 6 5-1 5-5h-4q0 3-2 2" fill="none" stroke="#fff" stroke-width="2"/><text x="6" y="21.500" font-size="5.500" font-family="Liberation Sans" font-weight="bold" fill="#fff">PDF</text></svg></div>
<div class="app run"><svg width="21" height="22"><rect width="21" height="21" rx="2" fill="#273440"/><path d="m9 4 3 3-3 3-3-3z" fill="#fff"/><path d="m13 8 3 3-7 7-3-3z" fill="#51aaa0"/></svg></div>
<div class="app run"><svg width="18" height="23"><path d="M0 0h18v23H0z" fill="#fff"/><path d="M2.500 2.500h13v4h-13z" fill="#111"/><path d="M3 10h12M3 14.500h12M3 19h12" stroke="#111" stroke-width="2.400" stroke-dasharray="3 1.500"/></svg></div></div>
<span data-w="39" style="font-size:12px;margin-left:99px">Address</span>
<div class="addr d-flex align-items-center justify-content-end"><svg width="32" height="19" fill="none" stroke="#666"><path d="m1 8 4 4 4-4M13.500 0v19" stroke="#777"/><path d="M26.500 6.500A4.500 4.500 0 1 0 28 10M27 4v3.500h-3.500" stroke-width="1.500"/></svg></div>
<div class="tray d-flex align-items-center"><svg width="16" height="16" fill="none" stroke="#eee" stroke-width="1.400"><path d="m3 10 5-5 5 5"/></svg>
<svg width="17" height="16" fill="none" stroke="#eee" stroke-width="1.200"><path d="M6 4.500h9v7H5v-3M16 7v2M1 3h4v2q-2 2-4 0zM3 6v3M2 1.500v2M4 1.500v2"/><path d="M7.500 6h6v4h-6z" fill="#eee"/></svg>
<svg width="18" height="16" fill="none" stroke="#eee" stroke-width="1.200"><path d="M5 3.500h10v7H6M1 2h4v3H1zM3 5v8M3 12.500h6"/><path d="M11 6l5 9H6z" fill="#f2c731" stroke="none"/><path d="M11 9v3M11 13v1" stroke="#222"/></svg>
<svg width="18" height="16" fill="none" stroke="#eee" stroke-width="1.200"><path d="M1 6h3l4-3v10L4 10H1zM10 6q2 2 0 4M12 4q4 4 0 8M14 2.500q5 5.500 0 11"/></svg>
<svg width="17" height="16" fill="none" stroke="#eee" stroke-width="1.300"><path d="M1.500 1.500h14v10H10L8 14l-2-2.500H1.500zM4 5h9M4 8h9"/></svg></div>
<div class="clock"><span data-w="45">12:15 PM</span><br><span data-w="49">5/14/2020</span></div>
</footer>

<div class="commonviews"><div class="hd ui d-flex align-items-center justify-content-between"><span data-w="79">Common Views</span><svg width="10" height="10"><path d="m.5.500 9 9m0-9-9 9" stroke="#888"/></svg></div>
<svg width="110" height="97" viewBox="1032 465 110 97"><defs><radialGradient id="glow"><stop offset="0" stop-color="#ffef20"/><stop offset=".55" stop-color="#fbe927"/><stop offset="1" stop-color="#fbe927" stop-opacity="0"/></radialGradient></defs>
<path fill="#c0c0c0" d="M1032 465h110v97h-110z"/>
<path d="M1096 480v26l33 12" stroke="#888" stroke-dasharray="3 2" fill="none"/><circle cx="1096" cy="503" r="4.500" fill="#fff"/>
<path d="M1044 502 1096 480l33.500 12v26L1075 545M1044 502v26" fill="none" stroke="#222" stroke-width="1.100"/>
<path d="M1053 525 1068 519 1121 496V507q-2 5-6 7l-51 23q-9 3-11-3z" fill="#b00c2b"/>
<path d="M1053.500 523 1062 514l4-8 10 4v5l34-15 12-6q-1 8-6 11l-50 22q-9 3-12.500-2z" fill="#237a2d"/>
<path d="M1060 522l3-9 6 1v9l-6 4z" fill="#999" stroke="#ccc" stroke-dasharray="1 1"/><path d="M1078 515l40-18M1062 512l5 8M1066 508l8 5" stroke="#173d1d" stroke-width="1.300"/>
<path d="M1044 502l31 15v28M1075 517l46-20" fill="none" stroke="#222" stroke-width="1.100"/>
<g fill="#fff" stroke="#777" stroke-width="1.300"><circle cx="1096" cy="480" r="5.300"/><circle cx="1129.500" cy="492" r="5.300"/><circle cx="1129.500" cy="518" r="5.300"/><circle cx="1075" cy="545" r="5.300"/><circle cx="1044" cy="528" r="5.300"/><circle cx="1075" cy="517" r="5.300"/></g><circle cx="1044" cy="502" r="9.500" fill="url(#glow)"/>
<path d="m1066 473 4-2 5 6 3-3v10h-9l3-3z" fill="#fff" stroke="#2a8c5a"/><path d="M1079 474v10.500h-9" stroke="#107a45" fill="none" stroke-width="1.500"/>
<path d="m1126 473-4-2-5 5-3-3v10h9l-3-3z" fill="#fff" stroke="#8a4a50" stroke-width=".8"/><path d="m1127 473-7 7 3 3.500h-9" stroke="#c2202e" fill="none" stroke-width="1.500"/>
<path d="m1097 539 6 8h-3v8h-6v-8h-4z" fill="#fff" stroke="#2a2f9c"/><path d="M1094 555v-7h-3" stroke="#1c237f" stroke-width="2" fill="none"/></svg>
<div class="lb"><span data-w="38">Isometric</span></div></div>
<div class="wmark ui"><div class="a"><span data-w="148">Activate Windows</span></div><div class="b"><span data-w="220">Go to Settings to activate Windows.</span></div></div>

<script>
const icon = n => `<svg width="16" height="16"><use href="#${n}"/></svg>`;
document.querySelectorAll('[data-tools]').forEach(g => {
  g.innerHTML = g.dataset.tools.split(' ').map((n, i) => `<button class="tb${g.dataset.on && !i ? ' on' : ''}">${icon(n)}</button>`).join('');
});
// name, icon, depth, label width, toggle sign
const rows = [['PIPE','fpipe',0,23,'-'],['Area 123','farea',1,41,'-'],['Unit 123','funit',2,38,'-'],['Equipment','feq',3,47,'-'],['c1101','eqr',4,29,'-'],
 ['c1','cylg',5,11],['C2','cylg',5,13],['cone','cylg',5,23],['DISH','cylg',5,24],['DP','cylg',5,14],
 ...Array.from({length:13},()=>['Piping S','pn',5,36]),['support','cylg',5,33],['D1201','eqr',4,30,'+'],['E1301','eqr',4,29,'+'],['piping','fp',3,27,'+']];
document.getElementById('tree').innerHTML = rows.map(([t,ic,d,w,s],r) => {
  let g = '';
  for (let k = 0; k <= d; k++) {
    const next = rows.slice(r + 1), stop = next.findIndex(x => x[2] < k);
    const more = (stop < 0 ? next : next.slice(0, stop)).some(x => x[2] === k);
    const own = k === d;
    const c = own ? (r ? (more ? 'v' : 'v up') : '') + ' h' : (more ? 'v' : '');
    g += `<span class="gd ${c}">${own && s ? `<b class="${s === '+' ? 'p' : ''}"></b>` : ''}</span>`;
  }
  return `<div class="trow">${g}${icon(ic)}<span data-w="${w}" style="margin-left:1px">${t}</span></div>`;
}).join('');
// condense each label to its column width
document.querySelectorAll('[data-w]').forEach(e => {
  const w = +e.dataset.w, s = w / e.getBoundingClientRect().width;
  e.innerHTML = `<span class="fit" style="transform:scaleX(${s.toFixed(4)})">${e.innerHTML}</span>`;
  e.style.width = w + 'px';
  e.style.textAlign = 'left';
  e.style.flex = 'none';
});
</script>
</body>
</html>
